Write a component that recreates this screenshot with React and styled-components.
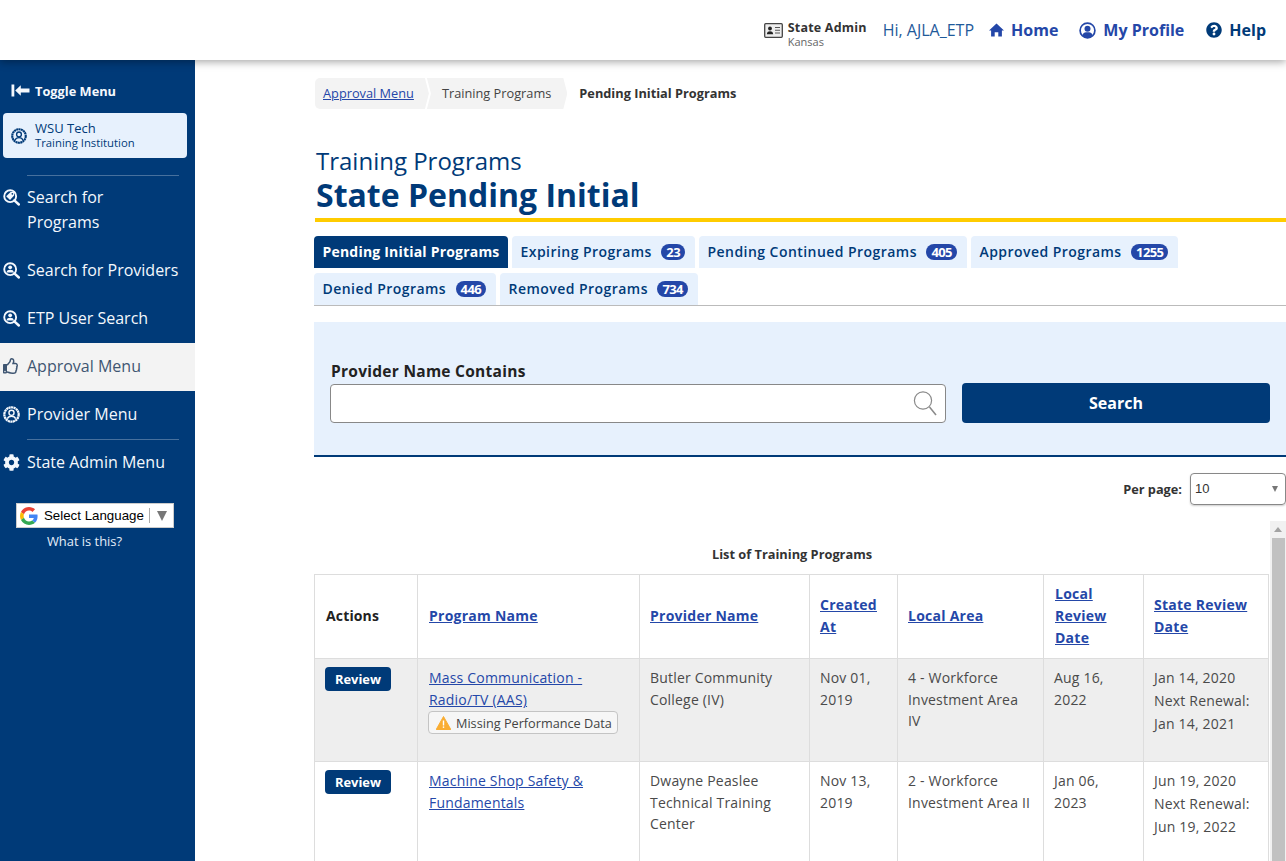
import React from "react";
import styled, { createGlobalStyle } from "styled-components";
import { FaQuestionCircle, FaCog, FaRegThumbsUp } from "react-icons/fa";

const NAVY = "#003a78";
const LINK = "#2447a8";
const PALE = "#f4f8fd";

const Global = createGlobalStyle`
  html, body { margin: 0; padding: 0; height: 861px; overflow: hidden; background: #fff; }
  body { font-family: "Open Sans", "Liberation Sans", sans-serif; color: #333; }
  * { box-sizing: border-box; }
`;

const Page = styled.div`
  width: 1286px;
  height: 861px;
  overflow: hidden;
  display: flex;
  flex-direction: column;
  position: relative;
`;
const Header = styled.header`
  height: 60px;
  flex: none;
  display: flex;
  align-items: center;
  justify-content: flex-end;
  padding-right: 20px;
  background: #fff;
  box-shadow: 0 2px 8px rgba(0, 0, 0, 0.35);
  position: relative;
  z-index: 2;
`;
const RoleBox = styled.div`
  display: flex;
  align-items: center;
  gap: 5px;
  margin: 10px 17px 0 0;
`;
const RoleIconWrap = styled.span`
  display: flex;
  margin-top: -9px;
`;
const RoleText = styled.div`
  display: flex;
  flex-direction: column;
`;
const RoleName = styled.span`
  font-size: 12.5px;
  line-height: 14px;
  font-weight: 700;
  color: #333;
  letter-spacing: 0.2px;
`;
const RoleState = styled.span`
  font-size: 11px;
  line-height: 14px;
  color: #666;
`;
const Hi = styled.span`
  font-size: 16px;
  color: #1f5a9a;
  margin: 0 15px 0 -1px;
`;
const NavLink = styled.a`
  display: flex;
  align-items: center;
  gap: 7px;
  font-size: 16px;
  font-weight: 700;
  color: ${(p) => p.$color || LINK};
  margin-left: ${(p) => p.$gap || 0}px;
`;
const Body = styled.div`
  flex: 1;
  display: flex;
  min-height: 0;
`;
const Side = styled.aside`
  width: 195px;
  flex: none;
  background: ${NAVY};
  color: #fff;
  padding-top: 19px;
`;
const Toggle = styled.div`
  display: flex;
  align-items: center;
  gap: 5px;
  padding-left: 11px;
  height: 22px;
  font-size: 12.8px;
  font-weight: 700;
  color: ${PALE};
`;
const ToggleLabel = styled.span`
  margin-top: 2px;
`;
const OrgCard = styled.div`
  margin: 12px 8px 0 3px;
  height: 45px;
  background: #e7f1fd;
  border-radius: 4px;
  display: flex;
  align-items: center;
  gap: 8px;
  padding-left: 8px;
  color: ${NAVY};
`;
const OrgName = styled.div`
  font-size: 13px;
  line-height: 15px;
`;
const OrgType = styled.div`
  font-size: 11.3px;
  line-height: 14px;
`;
const Divider = styled.div`
  height: 1px;
  margin: ${(p) => p.$top || 0}px 16px ${(p) => p.$bottom || 0}px 27px;
  background: rgba(255, 255, 255, 0.28);
`;
const MenuItem = styled.div`
  display: flex;
  align-items: ${(p) => (p.$multi ? "flex-start" : "center")};
  font-size: 16px;
  line-height: 25px;
  padding: ${(p) => (p.$multi ? "9px 0 0 3px" : p.$active ? "0 0 2px 3px" : "0 0 0 3px")};
  height: ${(p) => (p.$multi ? "70px" : "48px")};
  margin: ${(p) => (p.$active ? "1px 0 -1px" : "0")};
  background: ${(p) => (p.$active ? "#f3f3f3" : "transparent")};
  color: ${(p) => (p.$active ? "#3f5672" : PALE)};
`;
const MenuIcon = styled.span`
  width: 24px;
  flex: none;
  display: flex;
  align-items: center;
  height: 25px;
`;
const LangBox = styled.div`
  margin: 17px 21px 0 16px;
  height: 25px;
  background: #fff;
  border: 1px solid #ccc;
  display: flex;
  align-items: center;
  padding-left: 3px;
  font-family: "Liberation Sans", Arial, sans-serif;
  font-size: 13.3px;
  color: #000;
`;
const LangText = styled.span`
  margin-left: 6px;
`;
const LangSep = styled.span`
  width: 1px;
  height: 15px;
  background: #aaa;
  margin: 0 7px 0 5px;
`;
const LangArrow = styled.span`
  width: 0;
  height: 0;
  border-left: 5px solid transparent;
  border-right: 5px solid transparent;
  border-top: 10px solid #777;
`;
const WhatIs = styled.div`
  margin-top: 5px;
  width: 169px;
  text-align: center;
  font-size: 12.9px;
  line-height: 17px;
  color: #e4edf8;
`;
const Main = styled.main`
  flex: 1;
  min-width: 0;
  padding: 18px 0 0 119px;
`;
const Crumbs = styled.nav`
  display: flex;
  height: 31px;
  margin-left: 1px;
  font-size: 12.78px;
  align-items: stretch;
`;
const Crumb = styled.span`
  display: flex;
  align-items: center;
  background: #f3f3f3;
  color: #444;
  padding: ${(p) => (p.$first ? "0 15px 2px 8px" : "0 16px 2px 15px")};
  margin-right: ${(p) => (p.$first ? "-2px" : "0")};
  border-radius: ${(p) => (p.$first ? "5px 0 0 5px" : "0")};
  clip-path: ${(p) =>
    p.$first
      ? "polygon(0 0, calc(100% - 4px) 0, 100% 50%, calc(100% - 4px) 100%, 0 100%)"
      : "polygon(0 0, calc(100% - 4px) 0, 100% 50%, calc(100% - 4px) 100%, 0 100%, 4px 50%)"};
`;
const CrumbLink = styled.a`
  color: ${LINK};
  text-decoration: underline;
`;
const CrumbCurrent = styled.strong`
  display: flex;
  align-items: center;
  padding: 0 0 2px 12px;
  color: #333;
  font-weight: 700;
`;
const TitleBlock = styled.div`
  margin: 35px 0 0 1px;
  padding-left: 1px;
  border-bottom: 4px solid #ffcc00;
  height: 78px;
  color: ${NAVY};
`;
const TitleSmall = styled.div`
  font-size: 24px;
  line-height: 33px;
`;
const TitleBig = styled.h1`
  margin: 0;
  font-size: 32px;
  line-height: 35px;
  font-weight: 700;
`;
const TabsWrap = styled.div`
  margin-top: 14px;
  display: flex;
  flex-wrap: wrap;
  gap: 5px 4px;
  border-bottom: 1px solid #bbb;
`;
const Tab = styled.div`
  height: 32px;
  display: flex;
  align-items: center;
  gap: 9.5px;
  padding: 0 ${(p) => (p.$badge ? 10 : 8.5)}px 2px 8.5px;
  border-radius: 4px 4px 0 0;
  font-size: 14px;
  font-weight: ${(p) => (p.$active ? 700 : 600)};
  letter-spacing: ${(p) => (p.$active ? "0.2px" : "0.45px")};
  color: ${(p) => (p.$active ? "#fff" : NAVY)};
  background: ${(p) => (p.$active ? NAVY : "#e7f1fd")};
`;
const Badge = styled.span`
  margin-top: 2px;
  background: ${LINK};
  color: #fff;
  font-size: 13px;
  font-weight: 700;
  height: 16px;
  line-height: 16px;
  padding: 0 5px;
  border-radius: 8px;
  letter-spacing: -0.6px;
`;
const Filter = styled.section`
  margin-top: 16px;
  height: 135px;
  background: #e7f1fd;
  border-bottom: 2px solid ${NAVY};
  padding: 39px 16px 0 17px;
  display: flex;
  gap: 16px;
  align-items: flex-start;
`;
const Field = styled.div`
  width: 615px;
`;
const Label = styled.label`
  display: block;
  font-size: 15.5px;
  line-height: 21px;
  font-weight: 700;
  color: #222;
  letter-spacing: 0.27px;
`;
const InputBox = styled.div`
  height: 39px;
  margin: 2px 0 0 -1px;
  background: #fff;
  border: 1px solid #888;
  border-radius: 4px;
  display: flex;
  align-items: center;
  justify-content: flex-end;
  padding-right: 8px;
`;
const SearchBtn = styled.button`
  margin-top: 22px;
  width: 308px;
  height: 40px;
  border: 0;
  border-radius: 4px;
  background: ${NAVY};
  color: #fff;
  font: 700 16px "Open Sans", sans-serif;
`;
const PerRow = styled.div`
  margin-top: 15px;
  height: 33px;
  display: flex;
  justify-content: flex-end;
  align-items: center;
  gap: 8px;
`;
const PerLabel = styled.span`
  font-size: 12.75px;
  font-weight: 700;
  color: #333;
`;
const Select = styled.div`
  width: 96px;
  height: 32px;
  border: 1px solid #888;
  border-radius: 4px;
  box-shadow: 0 1px 2px rgba(0, 0, 0, 0.2);
  display: flex;
  align-items: center;
  justify-content: space-between;
  padding: 0 7px 0 4px;
  font-family: "Liberation Sans", Arial, sans-serif;
  font-size: 13px;
  color: #333;
`;
const SelectArrow = styled.span`
  width: 0;
  height: 0;
  border-left: 3px solid transparent;
  border-right: 3px solid transparent;
  border-top: 6px solid #777;
`;
const TableArea = styled.div`
  margin-top: 16px;
  display: flex;
  align-items: flex-start;
`;
const TableCol = styled.div`
  width: 956px;
  flex: none;
`;
const Caption = styled.div`
  margin-top: 24px;
  height: 29px;
  text-align: center;
  font-size: 12.8px;
  line-height: 18px;
  font-weight: 700;
  color: #333;
`;
const Table = styled.table`
  width: 954px;
  border-collapse: collapse;
  table-layout: fixed;
  font-size: 14px;
  line-height: 21.6px;
`;
const Th = styled.th`
  border: 1px solid #ddd;
  padding: 7px 10px 9px;
  text-align: left;
  height: 84px;
  line-height: 22px;
  font-weight: 700;
  color: #222;
  letter-spacing: 0.25px;
  vertical-align: middle;
  &:nth-child(1), &:nth-child(2), &:nth-child(6) { padding-left: 11px; }
  &:nth-child(1) { letter-spacing: 0.15px; }
`;
const HeadLink = styled.a`
  color: ${LINK};
  text-decoration: underline;
`;
const Tr = styled.tr`
  background: ${(p) => (p.$shade ? "#eeeeee" : "#fff")};
`;
const Td = styled.td`
  border: 1px solid #ddd;
  padding: 8px 10px;
  vertical-align: top;
  color: #4a4a4a;
  letter-spacing: 0.19px;
  height: 103px;
  &:nth-child(2) { padding-left: 11px; }
`;
const ReviewBtn = styled.button`
  display: block;
  width: 66px;
  height: 24px;
  padding: 0;
  border: 0;
  border-radius: 4px;
  background: ${NAVY};
  color: #fff;
  font: 700 12.9px "Open Sans", sans-serif;
`;
const ProgLink = styled.a`
  color: ${LINK};
  text-decoration: underline;
`;
const Warn = styled.div`
  display: inline-flex;
  align-items: center;
  gap: 5px;
  height: 23px;
  padding: 0 5px 0 7px;
  margin: 1px 0 0 -1px;
  border: 1px solid #c4c4c4;
  border-radius: 4px;
  background: #f6f6f6;
  font-size: 12.7px;
  color: #444;
  white-space: nowrap;
  letter-spacing: 0;
`;
const WarnText = styled.span`
  margin-top: 2px;
`;
const RenewalBlock = styled.div`
  margin-top: -1px;
`;
const Renewal = styled.div`
  line-height: 23px;
`;
const Track = styled.div`
  flex: none;
  width: 16px;
  height: 340px;
  background: #f1f1f1;
  display: flex;
  flex-direction: column;
  align-items: center;
`;
const TrackUp = styled.div`
  height: 17px;
  display: flex;
  align-items: center;
  &::before {
    content: "";
    border-left: 4px solid transparent;
    border-right: 4px solid transparent;
    border-bottom: 5px solid #a3a3a3;
  }
`;
const Thumb = styled.div`
  width: 13px;
  flex: 1;
  background: #c1c1c1;
`;

const SearchIcon = ({ inner }) => (
  <svg width="17" height="17" viewBox="0 0 18 18" fill="none">
    <circle cx="7.6" cy="7.6" r="6.3" stroke={PALE} strokeWidth="2" />
    <path d="M12 12 L16.8 16.4" stroke={PALE} strokeWidth="2.6" strokeLinecap="round" />
    {inner === "tag" ? (
      <>
        <path d="M3.4 7.6 L8 3.2 L11.8 3.2 L11.8 7 L7.4 11.6 Z" fill={PALE} />
        <circle cx="9.9" cy="5.1" r="0.9" fill={NAVY} />
      </>
    ) : (
      <g fill={PALE}>
        <circle cx="7.6" cy="5.6" r="2" />
        <path d="M3.8 11 C3.8 9 5.6 8.2 7.6 8.2 C9.6 8.2 11.4 9 11.4 11 Z" />
      </g>
    )}
  </svg>
);
const ProfileRing = ({ color, size = 17 }) => (
  <svg width={size} height={size} viewBox="0 0 18 18" fill="none">
    <circle cx="9" cy="9" r="7.6" stroke={color} strokeWidth="2.4" strokeDasharray="2.3 .4" />
    <circle cx="9" cy="7.2" r="2.7" stroke={color} strokeWidth="1.5" />
    <path d="M4.6 13.6 C5.4 11.2 7 10.8 9 10.8 C11 10.8 12.6 11.2 13.4 13.6" stroke={color} strokeWidth="1.5" />
  </svg>
);
const IdCard = () => (
  <svg width="19" height="15" viewBox="0 0 19 15" fill="none">
    <rect x="0.7" y="0.7" width="17.6" height="13.6" rx="1" fill="#eee" stroke="#444" strokeWidth="1.3" />
    <circle cx="6" cy="5.5" r="1.9" fill="#222" />
    <path d="M2.8 11.3 C3 8.8 4.5 8.2 6 8.2 C7.5 8.2 9 8.8 9.2 11.3 Z" fill="#222" />
    <path d="M11 4.5 H16 M11 7.3 H16 M11 10 H16" stroke="#555" strokeWidth="1.1" />
  </svg>
);
const HomeIcon = () => (
  <svg width="15" height="14" viewBox="0 0 15 14" fill={LINK}>
    <path d="M7.5 0.4 L15 7.4 H12.9 V13.6 H9.3 V9.2 H5.7 V13.6 H2.1 V7.4 H0 Z" />
  </svg>
);
const UserCircle = () => (
  <svg width="17" height="17" viewBox="0 0 17 17" fill="none">
    <circle cx="8.5" cy="8.5" r="7.4" stroke={LINK} strokeWidth="1.7" />
    <circle cx="8.5" cy="6.7" r="3" fill={LINK} />
    <path d="M3.3 13.4 C4 10.8 6 10.3 8.5 10.3 C11 10.3 13 10.8 13.7 13.4 C12.4 15 10.5 15.6 8.5 15.6 C6.5 15.6 4.6 15 3.3 13.4 Z" fill={LINK} />
  </svg>
);
const ToggleIcon = () => (
  <svg width="19" height="13" viewBox="0 0 19 13" fill={PALE}>
    <rect x="0.5" y="0.5" width="2.8" height="12" />
    <path d="M4.2 6.5 L9.8 1.2 V4.4 H18.5 V8.6 H9.8 V11.8 Z" />
  </svg>
);
const GoogleG = () => (
  <svg width="18" height="18" viewBox="0 0 48 48">
    <path fill="#EA4335" d="M24 9.5c3.5 0 6.7 1.2 9.2 3.6l6.9-6.9C35.9 2.4 30.5 0 24 0 14.6 0 6.5 5.4 2.6 13.2l8 6.2C12.5 13.7 17.8 9.5 24 9.5z" />
    <path fill="#4285F4" d="M46.9 24.5c0-1.6-.1-3.1-.4-4.5H24v9h12.9c-.6 3-2.2 5.5-4.7 7.2l7.7 6c4.5-4.2 7-10.3 7-17.7z" />
    <path fill="#FBBC05" d="M10.5 28.6c-.5-1.4-.8-3-.8-4.6s.3-3.2.8-4.6l-8-6.2C.9 16.5 0 20.1 0 24s.9 7.5 2.6 10.8l7.9-6.2z" />
    <path fill="#34A853" d="M24 48c6.5 0 11.9-2.1 15.9-5.8l-7.7-6c-2.2 1.4-4.9 2.3-8.2 2.3-6.2 0-11.5-4.2-13.4-9.9l-8 6.2C6.5 42.6 14.6 48 24 48z" />
  </svg>
);
const Magnifier = () => (
  <svg width="24" height="27" viewBox="0 0 24 27" fill="none" stroke="#8a8a8a">
    <circle cx="10" cy="10.5" r="8.6" strokeWidth="1.2" />
    <path d="M16.5 17 L23 25" strokeWidth="1.6" />
  </svg>
);
const WarnIcon = () => (
  <svg width="15" height="14" viewBox="0 0 15 14">
    <path d="M7.5 0.5 L14.8 13.5 H0.2 Z" fill="#f9ad33" stroke="#f9ad33" strokeLinejoin="round" />
    <rect x="6.8" y="4.5" width="1.4" height="5" fill="#fff" />
    <rect x="6.8" y="10.4" width="1.4" height="1.5" fill="#fff" />
  </svg>
);

const columns = [103, 222, 170, 88, 146, 100, 125];
const heads = ["Program Name", "Provider Name", "Created At", "Local Area", "Local Review Date", "State Review Date"];

const rows = [
  {
    name: "Mass Communication - Radio/TV (AAS)",
    warn: true,
    provider: "Butler Community College (IV)",
    created: "Nov 01, 2019",
    area: "4 - Workforce Investment Area IV",
    local: "Aug 16, 2022",
    state: "Jan 14, 2020",
    next: "Jan 14, 2021",
  },
  {
    name: "Machine Shop Safety & Fundamentals",
    provider: "Dwayne Peaslee Technical Training Center",
    created: "Nov 13, 2019",
    area: "2 - Workforce Investment Area II",
    local: "Jan 06, 2023",
    state: "Jun 19, 2020",
    next: "Jun 19, 2022",
  },
];

export default function App() {
  return (
    <Page>
      <Global />
      <Header>
        <RoleBox>
          <RoleIconWrap><IdCard /></RoleIconWrap>
          <RoleText>
            <RoleName>State Admin</RoleName>
            <RoleState>Kansas</RoleState>
          </RoleText>
        </RoleBox>
        <Hi>Hi, AJLA_ETP</Hi>
        <NavLink><HomeIcon />Home</NavLink>
        <NavLink $gap={21}><UserCircle />My Profile</NavLink>
        <NavLink $gap={22} $color={NAVY}><FaQuestionCircle size={16} />Help</NavLink>
      </Header>
      <Body>
        <Side>
          <Toggle><ToggleIcon /><ToggleLabel>Toggle Menu</ToggleLabel></Toggle>
          <OrgCard>
            <ProfileRing color={NAVY} size={16} />
            <div>
              <OrgName>WSU Tech</OrgName>
              <OrgType>Training Institution</OrgType>
            </div>
          </OrgCard>
          <Divider $top={17} />
          <MenuItem $multi>
            <MenuIcon><SearchIcon inner="tag" /></MenuIcon>
            <span>Search for<br />Programs</span>
          </MenuItem>
          <MenuItem>
            <MenuIcon><SearchIcon /></MenuIcon>
            Search for Providers
          </MenuItem>
          <MenuItem>
            <MenuIcon><SearchIcon /></MenuIcon>
            ETP User Search
          </MenuItem>
          <MenuItem $active>
            <MenuIcon><FaRegThumbsUp size={16} color="#3f5672" /></MenuIcon>
            Approval Menu
          </MenuItem>
          <MenuItem>
            <MenuIcon><ProfileRing color={PALE} /></MenuIcon>
            Provider Menu
          </MenuItem>
          <Divider $top={1} $bottom={-2} />
          <MenuItem>
            <MenuIcon><FaCog size={17} color={PALE} /></MenuIcon>
            State Admin Menu
          </MenuItem>
          <LangBox>
            <GoogleG />
            <LangText>Select Language</LangText>
            <LangSep />
            <LangArrow />
          </LangBox>
          <WhatIs>What is this?</WhatIs>
        </Side>
        <Main>
          <Crumbs>
            <Crumb $first><CrumbLink>Approval Menu</CrumbLink></Crumb>
            <Crumb>Training Programs</Crumb>
            <CrumbCurrent>Pending Initial Programs</CrumbCurrent>
          </Crumbs>
          <TitleBlock>
            <TitleSmall>Training Programs</TitleSmall>
            <TitleBig>State Pending Initial</TitleBig>
          </TitleBlock>
          <TabsWrap>
            <Tab $active>Pending Initial Programs</Tab>
            <Tab $badge>Expiring Programs <Badge>23</Badge></Tab>
            <Tab $badge>Pending Continued Programs <Badge>405</Badge></Tab>
            <Tab $badge>Approved Programs <Badge>1255</Badge></Tab>
            <Tab $badge>Denied Programs <Badge>446</Badge></Tab>
            <Tab $badge>Removed Programs <Badge>734</Badge></Tab>
          </TabsWrap>
          <Filter>
            <Field>
              <Label>Provider Name Contains</Label>
              <InputBox><Magnifier /></InputBox>
            </Field>
            <SearchBtn>Search</SearchBtn>
          </Filter>
          <PerRow>
            <PerLabel>Per page:</PerLabel>
            <Select>10<SelectArrow /></Select>
          </PerRow>
          <TableArea>
            <TableCol>
              <Caption>List of Training Programs</Caption>
              <Table>
                <colgroup>
                  {columns.map((w, i) => <col key={i} style={{ width: w }} />)}
                </colgroup>
                <thead>
                  <tr>
                    <Th>Actions</Th>
                    {heads.map((h) => <Th key={h}><HeadLink>{h}</HeadLink></Th>)}
                  </tr>
                </thead>
                <tbody>
                  {rows.map((r, i) => (
                    <Tr key={r.name} $shade={i === 0}>
                      <Td><ReviewBtn>Review</ReviewBtn></Td>
                      <Td>
                        <ProgLink>{r.name}</ProgLink>
                        {r.warn && <Warn><WarnIcon /><WarnText>Missing Performance Data</WarnText></Warn>}
                      </Td>
                      <Td>{r.provider}</Td>
                      <Td>{r.created}</Td>
                      <Td>{r.area}</Td>
                      <Td>{r.local}</Td>
                      <Td>
                        <RenewalBlock>
                          <Renewal>{r.state}</Renewal>
                          <Renewal>Next Renewal:</Renewal>
                          <Renewal>{r.next}</Renewal>
                        </RenewalBlock>
                      </Td>
                    </Tr>
                  ))}
                </tbody>
              </Table>
            </TableCol>
            <Track>
              <TrackUp />
              <Thumb />
            </Track>
          </TableArea>
        </Main>
      </Body>
    </Page>
  );
}
